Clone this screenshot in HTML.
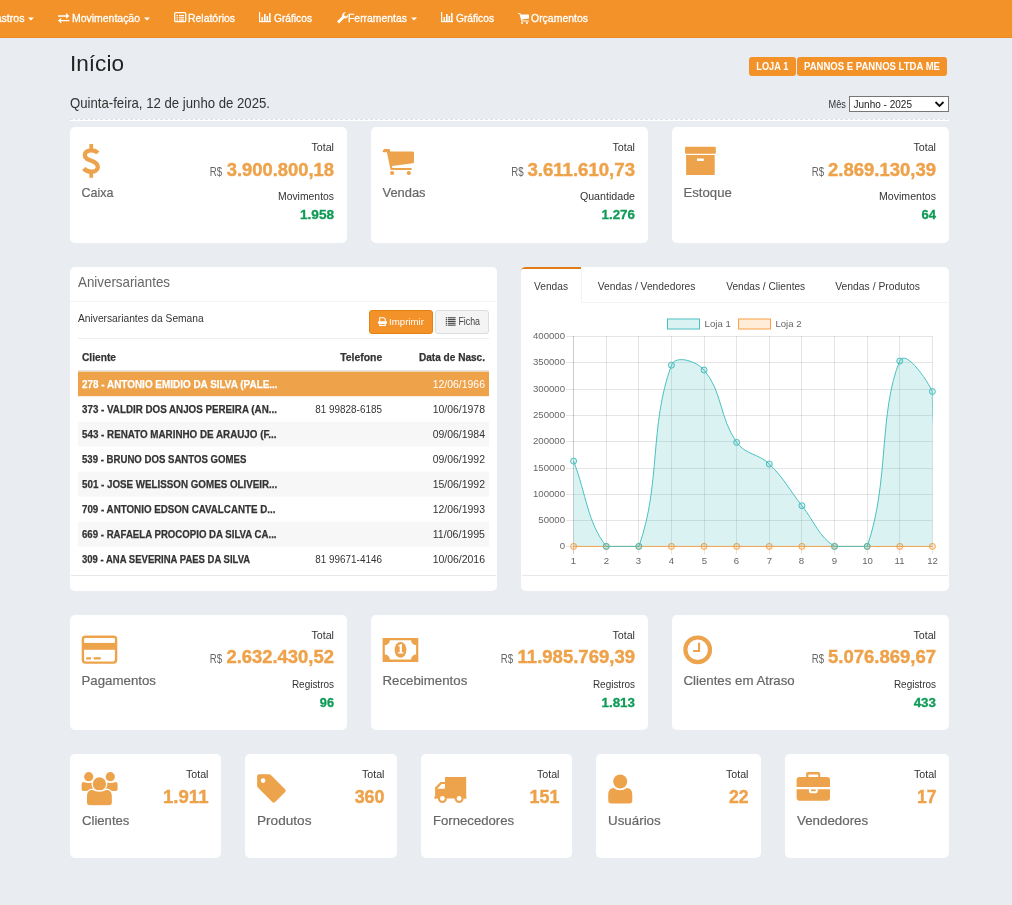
<!DOCTYPE html>
<html><head><meta charset="utf-8"><title>Início</title>
<style>html,body{margin:0;padding:0;background:#e9edf1;overflow:hidden} svg{display:block;will-change:transform;font-family:"Liberation Sans",sans-serif}</style>
</head><body><svg width="1012" height="905" viewBox="0 0 1012 905" font-family="Liberation Sans"><rect x="0" y="0" width="1012" height="905" fill="#e9edf1"/>
<rect x="0" y="0" width="1012" height="37" fill="#f29229"/>
<rect x="0" y="37" width="1012" height="1" fill="#ec8a22"/>
<rect x="0" y="38" width="1012" height="1" fill="#e3edf7"/>
<text x="24.5" y="21.6" font-size="10.6" fill="#fff" text-anchor="end" stroke="#fff" stroke-width="0.3">Cadastros</text>
<text x="72" y="21.6" font-size="10.6" fill="#fff" textLength="68" lengthAdjust="spacingAndGlyphs" stroke="#fff" stroke-width="0.3">Movimentação</text>
<text x="188" y="21.6" font-size="10.6" fill="#fff" textLength="47" lengthAdjust="spacingAndGlyphs" stroke="#fff" stroke-width="0.3">Relatórios</text>
<text x="274" y="21.6" font-size="10.6" fill="#fff" textLength="38" lengthAdjust="spacingAndGlyphs" stroke="#fff" stroke-width="0.3">Gráficos</text>
<text x="348" y="21.6" font-size="10.6" fill="#fff" textLength="59" lengthAdjust="spacingAndGlyphs" stroke="#fff" stroke-width="0.3">Ferramentas</text>
<text x="456" y="21.6" font-size="10.6" fill="#fff" textLength="38" lengthAdjust="spacingAndGlyphs" stroke="#fff" stroke-width="0.3">Gráficos</text>
<text x="531" y="21.6" font-size="10.6" fill="#fff" textLength="57" lengthAdjust="spacingAndGlyphs" stroke="#fff" stroke-width="0.3">Orçamentos</text>
<path d="M28 17.5 h6 l-3 3 z" fill="#fff"/>
<path d="M144 17.5 h6 l-3 3 z" fill="#fff"/>
<path d="M411 17.5 h6 l-3 3 z" fill="#fff"/>
<g fill="#fff"><path d="M58 15.3 h8.2 v-2.2 l3.2 2.9 l-3.2 2.9 v-2.2 h-8.2z"/><path d="M69.4 19.9 h-8.2 v-2.2 l-3.2 2.9 l3.2 2.9 v-2.2 h8.2z"/></g>
<g fill="none" stroke="#fff" stroke-width="1.3"><rect x="174.7" y="12.7" width="11" height="9" rx="1"/></g><g fill="#fff"><rect x="176.5" y="15" width="1.5" height="1.2"/><rect x="179" y="15" width="5" height="1.2"/><rect x="176.5" y="17.2" width="1.5" height="1.2"/><rect x="179" y="17.2" width="5" height="1.2"/><rect x="176.5" y="19.4" width="1.5" height="1.2"/><rect x="179" y="19.4" width="5" height="1.2"/></g>
<g fill="#fff"><rect x="259" y="12" width="1.2" height="10"/><rect x="259" y="21" width="12" height="1.2"/><rect x="261.5" y="17" width="1.6" height="4"/><rect x="264" y="14" width="1.6" height="7"/><rect x="266.5" y="16" width="1.6" height="5"/><rect x="269" y="13" width="1.6" height="8"/></g>
<g fill="#fff"><rect x="441" y="12" width="1.2" height="10"/><rect x="441" y="21" width="12" height="1.2"/><rect x="443.5" y="17" width="1.6" height="4"/><rect x="446" y="14" width="1.6" height="7"/><rect x="448.5" y="16" width="1.6" height="5"/><rect x="451" y="13" width="1.6" height="8"/></g>
<path d="M337 21.5 l5.2-5.2 a3.2 3.2 0 0 1 3.8-4 l-2 2 l0.6 1.6 l1.6 0.6 l2-2 a3.2 3.2 0 0 1 -4 3.8 l-5.2 5.2 z" fill="#fff"/>
<g fill="#fff"><path d="M518 13 h2.2 l0.6 1.6 h8.2 v4 l-7 1 l0.3 1 h6.5 v1 h-7.3 l-2-7.6 h-1.5z"/><circle cx="522" cy="23" r="1"/><circle cx="527" cy="23" r="1"/></g>
<text x="70" y="70.7" font-size="22.4" fill="#222" textLength="54" lengthAdjust="spacingAndGlyphs">Início</text>
<text x="70" y="108.2" font-size="14.2" fill="#333" textLength="200" lengthAdjust="spacingAndGlyphs">Quinta-feira, 12 de junho de 2025.</text>
<rect x="749" y="57" width="47" height="19" fill="#f29229" rx="3"/>
<rect x="797" y="57" width="150" height="19" fill="#f29229" rx="3"/>
<text x="756.3" y="70.3" font-size="10.2" fill="#fff" font-weight="bold" text-anchor=" stroke="#fff" stroke-width="0.4"" textLength="32" lengthAdjust="spacingAndGlyphs">LOJA 1</text>
<text x="804" y="70.3" font-size="10.2" fill="#fff" font-weight="bold" text-anchor=" stroke="#fff" stroke-width="0.4"" textLength="136" lengthAdjust="spacingAndGlyphs">PANNOS E PANNOS LTDA ME</text>
<text x="828.5" y="108.3" font-size="10.4" fill="#333" textLength="17.4" lengthAdjust="spacingAndGlyphs">Mês</text>
<rect x="849.5" y="96.5" width="99" height="15" fill="#fff" stroke="#767676" stroke-width="1"/>
<text x="853.5" y="108.3" font-size="10.8" fill="#222" textLength="58.5" lengthAdjust="spacingAndGlyphs">Junho - 2025</text>
<path d="M935.5 102 l4 4 l4 -4" fill="none" stroke="#111" stroke-width="1.8"/>
<rect x="70" y="119" width="879" height="2" fill="#fff"/>
<line x1="70" y1="119.5" x2="949" y2="119.5" stroke="#dfe2e6" stroke-width="1" stroke-dasharray="3 2"/>
<rect x="70" y="127" width="277" height="116" fill="#fff" rx="5"/>
<text x="334" y="150.7" font-size="10.7" fill="#333333" text-anchor="end" textLength="22.6" lengthAdjust="spacingAndGlyphs">Total</text>
<text x="209.8" y="175.9" font-size="12.2" fill="#666" textLength="12.4" lengthAdjust="spacingAndGlyphs">R$</text>
<text x="334" y="175.9" font-size="18.4" fill="#eea24a" font-weight="bold" text-anchor="end" textLength="107.3" lengthAdjust="spacingAndGlyphs" stroke="#eea24a" stroke-width="0.4">3.900.800,18</text>
<text x="334" y="199.8" font-size="10.2" fill="#333333" text-anchor="end" textLength="56" lengthAdjust="spacingAndGlyphs">Movimentos</text>
<text x="334" y="218.6" font-size="13" fill="#0f9b56" font-weight="bold" text-anchor="end" textLength="34" lengthAdjust="spacingAndGlyphs" stroke="#0f9b56" stroke-width="0.3">1.958</text>
<text x="81.5" y="197" font-size="13.6" fill="#666666" textLength="32" lengthAdjust="spacingAndGlyphs" stroke="#666666" stroke-width="0.2">Caixa</text>
<g><path d="M97.8 153 C96 150.8 93.8 150.3 91.3 150.3 C87.5 150.3 84.8 152 84.8 155 C84.8 158.5 87.8 159.5 91.5 160.8 C95.5 162.2 97.8 163.8 97.8 167 C97.8 170 95 171.7 91.3 171.7 C88 171.7 85.5 170.5 83.7 168.5" fill="none" stroke="#eda34b" stroke-width="4.3"/><rect x="89.4" y="144" width="3.7" height="5" fill="#eda34b"/><rect x="89.4" y="172" width="3.7" height="5.8" fill="#eda34b"/></g>
<rect x="371" y="127" width="277" height="116" fill="#fff" rx="5"/>
<text x="635" y="150.7" font-size="10.7" fill="#333333" text-anchor="end" textLength="22.6" lengthAdjust="spacingAndGlyphs">Total</text>
<text x="511.2" y="175.9" font-size="12.2" fill="#666" textLength="12.4" lengthAdjust="spacingAndGlyphs">R$</text>
<text x="635" y="175.9" font-size="18.4" fill="#eea24a" font-weight="bold" text-anchor="end" textLength="107.6" lengthAdjust="spacingAndGlyphs" stroke="#eea24a" stroke-width="0.4">3.611.610,73</text>
<text x="635" y="199.8" font-size="10.2" fill="#333333" text-anchor="end" textLength="55.1" lengthAdjust="spacingAndGlyphs">Quantidade</text>
<text x="635" y="218.6" font-size="13" fill="#0f9b56" font-weight="bold" text-anchor="end" textLength="33.5" lengthAdjust="spacingAndGlyphs" stroke="#0f9b56" stroke-width="0.3">1.276</text>
<text x="382.5" y="197" font-size="13.6" fill="#666666" textLength="43" lengthAdjust="spacingAndGlyphs" stroke="#666666" stroke-width="0.2">Vendas</text>
<g fill="#eda34b"><path d="M383.8 149 h5 a1.2 1.2 0 0 1 1.2 1 l0.2 1.4 h22.6 a1.2 1.2 0 0 1 1.2 1.2 v9.4 a1.2 1.2 0 0 1 -1 1.2 l-21 2.8 l0.4 1.9 h18.4 a1.1 1.1 0 0 1 0 2.2 h-20.2 l-3.7 -17.8 h-3.1 a1.2 1.2 0 0 1 0 -2.4z"/><circle cx="392.1" cy="173" r="2.1"/><circle cx="408.8" cy="173" r="2.1"/></g>
<rect x="672" y="127" width="277" height="116" fill="#fff" rx="5"/>
<text x="936" y="150.7" font-size="10.7" fill="#333333" text-anchor="end" textLength="22.6" lengthAdjust="spacingAndGlyphs">Total</text>
<text x="811.8" y="175.9" font-size="12.2" fill="#666" textLength="12.4" lengthAdjust="spacingAndGlyphs">R$</text>
<text x="936" y="175.9" font-size="18.4" fill="#eea24a" font-weight="bold" text-anchor="end" textLength="107.9" lengthAdjust="spacingAndGlyphs" stroke="#eea24a" stroke-width="0.4">2.869.130,39</text>
<text x="936" y="199.8" font-size="10.2" fill="#333333" text-anchor="end" textLength="57" lengthAdjust="spacingAndGlyphs">Movimentos</text>
<text x="936" y="218.6" font-size="13" fill="#0f9b56" font-weight="bold" text-anchor="end" textLength="14.5" lengthAdjust="spacingAndGlyphs" stroke="#0f9b56" stroke-width="0.3">64</text>
<text x="683.5" y="197" font-size="13.6" fill="#666666" textLength="48.3" lengthAdjust="spacingAndGlyphs" stroke="#666666" stroke-width="0.2">Estoque</text>
<g fill="#eda34b"><rect x="685" y="146.7" width="30.8" height="7" rx="1"/><path d="M686.1 155.1 h28.6 v19.9 h-28.6z M697 158.6 v2.3 h6.8 v-2.3z" fill-rule="evenodd"/></g>
<rect x="70" y="615" width="277" height="115" fill="#fff" rx="5"/>
<text x="334" y="638.7" font-size="10.7" fill="#333333" text-anchor="end" textLength="22.6" lengthAdjust="spacingAndGlyphs">Total</text>
<text x="209.7" y="662.9" font-size="12.2" fill="#666" textLength="12.4" lengthAdjust="spacingAndGlyphs">R$</text>
<text x="334" y="662.9" font-size="18.4" fill="#eea24a" font-weight="bold" text-anchor="end" textLength="107.6" lengthAdjust="spacingAndGlyphs" stroke="#eea24a" stroke-width="0.4">2.632.430,52</text>
<text x="334" y="687.8" font-size="10.2" fill="#333333" text-anchor="end" textLength="42.1" lengthAdjust="spacingAndGlyphs">Registros</text>
<text x="334" y="706.6" font-size="13" fill="#0f9b56" font-weight="bold" text-anchor="end" textLength="14.2" lengthAdjust="spacingAndGlyphs" stroke="#0f9b56" stroke-width="0.3">96</text>
<text x="81.5" y="685" font-size="13.6" fill="#666666" textLength="74.5" lengthAdjust="spacingAndGlyphs" stroke="#666666" stroke-width="0.2">Pagamentos</text>
<g><rect x="82.9" y="636.8" width="33.2" height="25.8" rx="2.5" fill="none" stroke="#eda34b" stroke-width="2.4"/><rect x="82" y="642.9" width="35" height="6.9" fill="#eda34b"/><rect x="86.2" y="657.2" width="4.8" height="2.3" fill="#eda34b"/><rect x="93.6" y="657.2" width="7.1" height="2.3" fill="#eda34b"/></g>
<rect x="371" y="615" width="277" height="115" fill="#fff" rx="5"/>
<text x="635" y="638.7" font-size="10.7" fill="#333333" text-anchor="end" textLength="22.6" lengthAdjust="spacingAndGlyphs">Total</text>
<text x="500.8" y="662.9" font-size="12.2" fill="#666" textLength="12.4" lengthAdjust="spacingAndGlyphs">R$</text>
<text x="635" y="662.9" font-size="18.4" fill="#eea24a" font-weight="bold" text-anchor="end" textLength="117.4" lengthAdjust="spacingAndGlyphs" stroke="#eea24a" stroke-width="0.4">11.985.769,39</text>
<text x="635" y="687.8" font-size="10.2" fill="#333333" text-anchor="end" textLength="42.1" lengthAdjust="spacingAndGlyphs">Registros</text>
<text x="635" y="706.6" font-size="13" fill="#0f9b56" font-weight="bold" text-anchor="end" textLength="33.5" lengthAdjust="spacingAndGlyphs" stroke="#0f9b56" stroke-width="0.3">1.813</text>
<text x="382.5" y="685" font-size="13.6" fill="#666666" textLength="84.8" lengthAdjust="spacingAndGlyphs" stroke="#666666" stroke-width="0.2">Recebimentos</text>
<g><path fill-rule="evenodd" fill="#eda34b" d="M382.6 638 h35.7 v23.9 h-35.7z M384.8 645.3 a5 5 0 0 0 5 -5 h21.3 a5 5 0 0 0 5 5 v9.2 a5 5 0 0 0 -5 5 h-21.3 a5 5 0 0 0 -5 -5z"/><ellipse cx="400.5" cy="649.8" rx="5.9" ry="7.9" fill="#eda34b"/><path d="M398.3 645.5 l2.6 -1.6 h1 v8.4 h1.6 v1.3 h-5.6 v-1.3 h1.8 v-6.3 l-1.4 0.7z" fill="#fff"/></g>
<rect x="672" y="615" width="277" height="115" fill="#fff" rx="5"/>
<text x="936" y="638.7" font-size="10.7" fill="#333333" text-anchor="end" textLength="22.6" lengthAdjust="spacingAndGlyphs">Total</text>
<text x="811.8" y="662.9" font-size="12.2" fill="#666" textLength="12.4" lengthAdjust="spacingAndGlyphs">R$</text>
<text x="936" y="662.9" font-size="18.4" fill="#eea24a" font-weight="bold" text-anchor="end" textLength="107.9" lengthAdjust="spacingAndGlyphs" stroke="#eea24a" stroke-width="0.4">5.076.869,67</text>
<text x="936" y="687.8" font-size="10.2" fill="#333333" text-anchor="end" textLength="42.1" lengthAdjust="spacingAndGlyphs">Registros</text>
<text x="936" y="706.6" font-size="13" fill="#0f9b56" font-weight="bold" text-anchor="end" textLength="22.3" lengthAdjust="spacingAndGlyphs" stroke="#0f9b56" stroke-width="0.3">433</text>
<text x="683.5" y="685" font-size="13.6" fill="#666666" textLength="111.2" lengthAdjust="spacingAndGlyphs" stroke="#666666" stroke-width="0.2">Clientes em Atraso</text>
<g><circle cx="697.7" cy="649.8" r="12.3" fill="none" stroke="#eda34b" stroke-width="4.2"/><path d="M698 642.8 h2.1 v9.3 h-7 v-2.1 h4.9z" fill="#eda34b"/></g>
<rect x="70" y="754" width="151" height="104" fill="#fff" rx="5"/>
<text x="208.5" y="778.4" font-size="10.7" fill="#333333" text-anchor="end" textLength="22.6" lengthAdjust="spacingAndGlyphs">Total</text>
<text x="208.5" y="802.8" font-size="18" fill="#eea24a" font-weight="bold" text-anchor="end" textLength="45.5" lengthAdjust="spacingAndGlyphs" stroke="#eea24a" stroke-width="0.4">1.911</text>
<text x="82" y="825" font-size="13.6" fill="#666666" textLength="47.4" lengthAdjust="spacingAndGlyphs" stroke="#666666" stroke-width="0.2">Clientes</text>
<g fill="#eda34b"><circle cx="88.7" cy="776.7" r="4.6"/><circle cx="110.3" cy="776.7" r="4.6"/><path d="M81.6 784 q0-2 2-2 q2.3 1.1 5.1 1.1 q2.8 0 5.1 -1.1 q2 0 2 2 v5 q0 2 -2 2 h-10.2 q-2 0 -2 -2z"/><path d="M103.4 784 q0-2 2-2 q2.3 1.1 5.1 1.1 q2.8 0 5.1 -1.1 q2 0 2 2 v5 q0 2 -2 2 h-10.2 q-2 0 -2 -2z"/><g fill="#eda34b" stroke="#fff" stroke-width="1.3"><circle cx="99.4" cy="784" r="7.3"/><path d="M86.3 796 q0-6.2 6.2-6.8 q3 1.8 6.9 1.8 q3.9 0 6.9 -1.8 q6.2 0.6 6.2 6.8 v6.8 q0 3 -3 3 h-20.2 q-3 0 -3 -3z"/></g></g>
<rect x="245" y="754" width="152" height="104" fill="#fff" rx="5"/>
<text x="384.5" y="778.4" font-size="10.7" fill="#333333" text-anchor="end" textLength="22.6" lengthAdjust="spacingAndGlyphs">Total</text>
<text x="384.5" y="802.8" font-size="18" fill="#eea24a" font-weight="bold" text-anchor="end" textLength="29.8" lengthAdjust="spacingAndGlyphs" stroke="#eea24a" stroke-width="0.4">360</text>
<text x="257" y="825" font-size="13.6" fill="#666666" textLength="54.5" lengthAdjust="spacingAndGlyphs" stroke="#666666" stroke-width="0.2">Produtos</text>
<g><path fill="#eda34b" d="M257.1 776.2 q0-2 2-2 h9.8 q1.2 0 2 0.8 l14.2 14.2 q1.4 1.4 0 2.8 l-10 10 q-1.4 1.4 -2.8 0 l-14.2 -14.2 q-1 -1 -1 -2.2z"/><circle cx="263.1" cy="780.6" r="2.3" fill="#fff"/></g>
<rect x="421" y="754" width="151" height="104" fill="#fff" rx="5"/>
<text x="559.5" y="778.4" font-size="10.7" fill="#333333" text-anchor="end" textLength="22.6" lengthAdjust="spacingAndGlyphs">Total</text>
<text x="559.5" y="802.8" font-size="18" fill="#eea24a" font-weight="bold" text-anchor="end" textLength="29.9" lengthAdjust="spacingAndGlyphs" stroke="#eea24a" stroke-width="0.4">151</text>
<text x="433" y="825" font-size="13.6" fill="#666666" textLength="81.1" lengthAdjust="spacingAndGlyphs" stroke="#666666" stroke-width="0.2">Fornecedores</text>
<g fill="#eda34b"><path fill-rule="evenodd" d="M445 777 h21.2 v21.5 h-21.2z M435.1 787.4 l5.4 -5.3 h4.5 v16.4 h-9.9z M437.3 788.8 h7.6 v-4.9 h-3.4z"/><rect x="434.2" y="796.7" width="2" height="1.8"/><rect x="464.5" y="796.7" width="1.9" height="1.8"/><circle cx="442.4" cy="798.5" r="4.5"/><circle cx="459.1" cy="798.5" r="4.5"/><circle cx="442.4" cy="798.5" r="2.4" fill="#fff"/><circle cx="459.1" cy="798.5" r="2.4" fill="#fff"/></g>
<rect x="596" y="754" width="165" height="104" fill="#fff" rx="5"/>
<text x="748.5" y="778.4" font-size="10.7" fill="#333333" text-anchor="end" textLength="22.6" lengthAdjust="spacingAndGlyphs">Total</text>
<text x="748.5" y="802.8" font-size="18" fill="#eea24a" font-weight="bold" text-anchor="end" textLength="19.6" lengthAdjust="spacingAndGlyphs" stroke="#eea24a" stroke-width="0.4">22</text>
<text x="608" y="825" font-size="13.6" fill="#666666" textLength="52.7" lengthAdjust="spacingAndGlyphs" stroke="#666666" stroke-width="0.2">Usuários</text>
<g fill="#eda34b"><path d="M608.2 795 q0-6.9 5.5-6.9 q2.6 2.2 6.5 2.2 q3.9 0 6.5 -2.2 q5.6 0 5.6 6.9 v5.4 q0 3 -3 3 h-18.1 q-3 0 -3 -3z"/><circle cx="620.2" cy="781.5" r="7.6" fill="#fff"/><circle cx="620.2" cy="781.5" r="7"/></g>
<rect x="785" y="754" width="164" height="104" fill="#fff" rx="5"/>
<text x="936.5" y="778.4" font-size="10.7" fill="#333333" text-anchor="end" textLength="22.6" lengthAdjust="spacingAndGlyphs">Total</text>
<text x="936.5" y="802.8" font-size="18" fill="#eea24a" font-weight="bold" text-anchor="end" textLength="19.4" lengthAdjust="spacingAndGlyphs" stroke="#eea24a" stroke-width="0.4">17</text>
<text x="797" y="825" font-size="13.6" fill="#666666" textLength="71.2" lengthAdjust="spacingAndGlyphs" stroke="#666666" stroke-width="0.2">Vendedores</text>
<g fill="#eda34b"><path fill-rule="evenodd" d="M806.1 777.1 v-3 q0-2 2-2 h10.1 q2 0 2 2 v3z M808.4 777.1 v-2.5 h9.8 v2.5z"/><path d="M796.6 780.1 q0-3 3-3 h27.4 q3 0 3 3 v6.8 h-33.4z"/><path d="M796.6 789.2 h12.3 v2.1 q0 2 2 2 h4.8 q2 0 2 -2 v-2.1 h12.3 v8.6 q0 3 -3 3 h-27.4 q-3 0 -3 -3z"/><rect x="811.1" y="789.4" width="4.6" height="1.8"/></g>
<rect x="70" y="267" width="427" height="324" fill="#fff" rx="5"/>
<text x="78" y="287.2" font-size="14.3" fill="#666" textLength="92" lengthAdjust="spacingAndGlyphs">Aniversariantes</text>
<rect x="70" y="301" width="427" height="1" fill="#f4f4f4"/>
<text x="78" y="322" font-size="11.4" fill="#333" textLength="125.7" lengthAdjust="spacingAndGlyphs">Aniversariantes da Semana</text>
<rect x="78" y="338" width="411" height="1" fill="#eeeeee"/>
<rect x="369.5" y="310.5" width="63" height="23" rx="2.5" fill="#f29229" stroke="#e3820f"/>
<text x="389" y="325.2" font-size="9.9" fill="#fff" textLength="35" lengthAdjust="spacingAndGlyphs">Imprimir</text>
<g fill="none" stroke="#fff" stroke-width="1.1"><path d="M379.7 321.4 v-3.6 h4.2 l1.4 1.4 v2.2"/><rect x="379.7" y="323.6" width="5.6" height="1.9"/></g><rect x="378" y="321.2" width="9" height="2.6" rx="0.6" fill="#fff"/>
<rect x="435.5" y="310.5" width="53" height="23" rx="2.5" fill="#f4f4f4" stroke="#dddddd"/>
<text x="458.4" y="325" font-size="10.2" fill="#444" textLength="21.6" lengthAdjust="spacingAndGlyphs">Ficha</text>
<g fill="#444"><rect x="445.8" y="317.20" width="1.2" height="1.1"/><rect x="447.8" y="317.20" width="7.8" height="1.1"/><rect x="445.8" y="319.05" width="1.2" height="1.1"/><rect x="447.8" y="319.05" width="7.8" height="1.1"/><rect x="445.8" y="320.90" width="1.2" height="1.1"/><rect x="447.8" y="320.90" width="7.8" height="1.1"/><rect x="445.8" y="322.75" width="1.2" height="1.1"/><rect x="447.8" y="322.75" width="7.8" height="1.1"/><rect x="445.8" y="324.60" width="1.2" height="1.1"/><rect x="447.8" y="324.60" width="7.8" height="1.1"/></g>
<text x="82" y="361" font-size="11" fill="#333" font-weight="bold" textLength="34" lengthAdjust="spacingAndGlyphs" stroke="#333" stroke-width="0.25">Cliente</text>
<text x="340.2" y="361" font-size="11" fill="#333" font-weight="bold" textLength="42" lengthAdjust="spacingAndGlyphs" stroke="#333" stroke-width="0.25">Telefone</text>
<text x="419" y="361" font-size="11" fill="#333" font-weight="bold" textLength="66" lengthAdjust="spacingAndGlyphs" stroke="#333" stroke-width="0.25">Data de Nasc.</text>
<rect x="78" y="370" width="411" height="1" fill="#e4e4e4"/>
<rect x="78" y="371" width="411" height="1" fill="#f6f6f6"/>
<rect x="78" y="371.6" width="411" height="24.6" fill="#eea24a"/>
<text x="82" y="388.3" font-size="11" fill="#fff" font-weight="bold" textLength="195.6" lengthAdjust="spacingAndGlyphs" stroke="#fff" stroke-width="0.25">278 - ANTONIO EMIDIO DA SILVA (PALE...</text>
<text x="432.7" y="388.3" font-size="11" fill="#fff" textLength="52.3" lengthAdjust="spacingAndGlyphs">12/06/1966</text>
<text x="82" y="413.3" font-size="11" fill="#333" font-weight="bold" textLength="194.9" lengthAdjust="spacingAndGlyphs" stroke="#333" stroke-width="0.25">373 - VALDIR DOS ANJOS PEREIRA (AN...</text>
<text x="315.3" y="413.3" font-size="11" fill="#333" textLength="66.6" lengthAdjust="spacingAndGlyphs">81 99828-6185</text>
<text x="432.7" y="413.3" font-size="11" fill="#333" textLength="52.3" lengthAdjust="spacingAndGlyphs">10/06/1978</text>
<rect x="78" y="421.6" width="411" height="25" fill="#f7f7f7"/>
<text x="82" y="438.3" font-size="11" fill="#333" font-weight="bold" textLength="194.5" lengthAdjust="spacingAndGlyphs" stroke="#333" stroke-width="0.25">543 - RENATO MARINHO DE ARAUJO (F...</text>
<text x="432.7" y="438.3" font-size="11" fill="#333" textLength="52.3" lengthAdjust="spacingAndGlyphs">09/06/1984</text>
<text x="82" y="463.3" font-size="11" fill="#333" font-weight="bold" textLength="164.3" lengthAdjust="spacingAndGlyphs" stroke="#333" stroke-width="0.25">539 - BRUNO DOS SANTOS GOMES</text>
<text x="432.7" y="463.3" font-size="11" fill="#333" textLength="52.3" lengthAdjust="spacingAndGlyphs">09/06/1992</text>
<rect x="78" y="471.6" width="411" height="25" fill="#f7f7f7"/>
<text x="82" y="488.3" font-size="11" fill="#333" font-weight="bold" textLength="195.2" lengthAdjust="spacingAndGlyphs" stroke="#333" stroke-width="0.25">501 - JOSE WELISSON GOMES OLIVEIR...</text>
<text x="432.7" y="488.3" font-size="11" fill="#333" textLength="52.3" lengthAdjust="spacingAndGlyphs">15/06/1992</text>
<text x="82" y="513.3" font-size="11" fill="#333" font-weight="bold" textLength="193.4" lengthAdjust="spacingAndGlyphs" stroke="#333" stroke-width="0.25">709 - ANTONIO EDSON CAVALCANTE D...</text>
<text x="432.7" y="513.3" font-size="11" fill="#333" textLength="52.3" lengthAdjust="spacingAndGlyphs">12/06/1993</text>
<rect x="78" y="521.6" width="411" height="25" fill="#f7f7f7"/>
<text x="82" y="538.3" font-size="11" fill="#333" font-weight="bold" textLength="194.5" lengthAdjust="spacingAndGlyphs" stroke="#333" stroke-width="0.25">669 - RAFAELA PROCOPIO DA SILVA CA...</text>
<text x="432.7" y="538.3" font-size="11" fill="#333" textLength="52.3" lengthAdjust="spacingAndGlyphs">11/06/1995</text>
<text x="82" y="563.3" font-size="11" fill="#333" font-weight="bold" textLength="168.2" lengthAdjust="spacingAndGlyphs" stroke="#333" stroke-width="0.25">309 - ANA SEVERINA PAES DA SILVA</text>
<text x="315.3" y="563.3" font-size="11" fill="#333" textLength="66.6" lengthAdjust="spacingAndGlyphs">81 99671-4146</text>
<text x="432.7" y="563.3" font-size="11" fill="#333" textLength="52.3" lengthAdjust="spacingAndGlyphs">10/06/2016</text>
<rect x="71" y="575" width="425" height="1" fill="#e8e8e8"/>
<rect x="521" y="267" width="428" height="324" fill="#fff" rx="5"/>
<rect x="581" y="302" width="368" height="1" fill="#f4f4f4"/>
<rect x="581" y="269" width="1" height="34" fill="#f4f4f4"/>
<path d="M521 272 q0-5 5-5 h55 v2 h-60z" fill="#e27c1b"/>
<text x="534" y="290" font-size="11" fill="#3a3a3a" textLength="34" lengthAdjust="spacingAndGlyphs">Vendas</text>
<text x="597.8" y="290" font-size="11" fill="#3a3a3a" textLength="97.6" lengthAdjust="spacingAndGlyphs">Vendas / Vendedores</text>
<text x="726.2" y="290" font-size="11" fill="#3a3a3a" textLength="79" lengthAdjust="spacingAndGlyphs">Vendas / Clientes</text>
<text x="835.2" y="290" font-size="11" fill="#3a3a3a" textLength="84.8" lengthAdjust="spacingAndGlyphs">Vendas / Produtos</text>
<rect x="522" y="575" width="426" height="1" fill="#e8e8e8"/>
<g font-family="Liberation Sans" font-size="9.6" fill="#666">
<rect x="667.5" y="319" width="32" height="10" fill="rgba(75,192,192,0.2)" stroke="rgb(75,192,192)" stroke-width="1"/>
<text x="704.6" y="327.4">Loja 1</text>
<rect x="738.5" y="319" width="32" height="10" fill="rgba(255,159,64,0.2)" stroke="rgb(255,159,64)" stroke-width="1"/>
<text x="775.4" y="327.4">Loja 2</text>
<line x1="566" y1="336.5" x2="932.4" y2="336.5" stroke="rgba(0,0,0,0.1)"/>
<text x="565" y="339.0" text-anchor="end">400000</text>
<line x1="566" y1="362.5" x2="932.4" y2="362.5" stroke="rgba(0,0,0,0.1)"/>
<text x="565" y="365.0" text-anchor="end">350000</text>
<line x1="566" y1="389.5" x2="932.4" y2="389.5" stroke="rgba(0,0,0,0.1)"/>
<text x="565" y="392.0" text-anchor="end">300000</text>
<line x1="566" y1="415.5" x2="932.4" y2="415.5" stroke="rgba(0,0,0,0.1)"/>
<text x="565" y="418.0" text-anchor="end">250000</text>
<line x1="566" y1="441.5" x2="932.4" y2="441.5" stroke="rgba(0,0,0,0.1)"/>
<text x="565" y="444.0" text-anchor="end">200000</text>
<line x1="566" y1="468.5" x2="932.4" y2="468.5" stroke="rgba(0,0,0,0.1)"/>
<text x="565" y="471.0" text-anchor="end">150000</text>
<line x1="566" y1="494.5" x2="932.4" y2="494.5" stroke="rgba(0,0,0,0.1)"/>
<text x="565" y="497.0" text-anchor="end">100000</text>
<line x1="566" y1="520.5" x2="932.4" y2="520.5" stroke="rgba(0,0,0,0.1)"/>
<text x="565" y="523.0" text-anchor="end">50000</text>
<line x1="566" y1="546.5" x2="932.4" y2="546.5" stroke="rgba(0,0,0,0.1)"/>
<text x="565" y="549.0" text-anchor="end">0</text>
<line x1="573.5" y1="336" x2="573.5" y2="554" stroke="rgba(0,0,0,0.2)"/>
<text x="573.5" y="563.6" text-anchor="middle">1</text>
<line x1="606.5" y1="336" x2="606.5" y2="554" stroke="rgba(0,0,0,0.1)"/>
<text x="606.5" y="563.6" text-anchor="middle">2</text>
<line x1="638.5" y1="336" x2="638.5" y2="554" stroke="rgba(0,0,0,0.1)"/>
<text x="638.5" y="563.6" text-anchor="middle">3</text>
<line x1="671.5" y1="336" x2="671.5" y2="554" stroke="rgba(0,0,0,0.1)"/>
<text x="671.5" y="563.6" text-anchor="middle">4</text>
<line x1="704.5" y1="336" x2="704.5" y2="554" stroke="rgba(0,0,0,0.1)"/>
<text x="704.5" y="563.6" text-anchor="middle">5</text>
<line x1="736.5" y1="336" x2="736.5" y2="554" stroke="rgba(0,0,0,0.1)"/>
<text x="736.5" y="563.6" text-anchor="middle">6</text>
<line x1="769.5" y1="336" x2="769.5" y2="554" stroke="rgba(0,0,0,0.1)"/>
<text x="769.5" y="563.6" text-anchor="middle">7</text>
<line x1="801.5" y1="336" x2="801.5" y2="554" stroke="rgba(0,0,0,0.1)"/>
<text x="801.5" y="563.6" text-anchor="middle">8</text>
<line x1="834.5" y1="336" x2="834.5" y2="554" stroke="rgba(0,0,0,0.1)"/>
<text x="834.5" y="563.6" text-anchor="middle">9</text>
<line x1="867.5" y1="336" x2="867.5" y2="554" stroke="rgba(0,0,0,0.1)"/>
<text x="867.5" y="563.6" text-anchor="middle">10</text>
<line x1="899.5" y1="336" x2="899.5" y2="554" stroke="rgba(0,0,0,0.1)"/>
<text x="899.5" y="563.6" text-anchor="middle">11</text>
<line x1="932.5" y1="336" x2="932.5" y2="554" stroke="rgba(0,0,0,0.1)"/>
<text x="932.5" y="563.6" text-anchor="middle">12</text>
</g>
<defs><clipPath id="ca"><rect x="572.6" y="331" width="359.99999999999994" height="216.39999999999998"/></clipPath></defs>
<line x1="573.6" y1="546.4" x2="932.4" y2="546.4" stroke="rgb(255,159,64)" stroke-width="1"/>
<circle cx="573.60" cy="546.4" r="3" fill="rgba(255,159,64,0.2)" stroke="rgb(255,159,64)" stroke-width="1"/>
<circle cx="606.22" cy="546.4" r="3" fill="rgba(255,159,64,0.2)" stroke="rgb(255,159,64)" stroke-width="1"/>
<circle cx="638.84" cy="546.4" r="3" fill="rgba(255,159,64,0.2)" stroke="rgb(255,159,64)" stroke-width="1"/>
<circle cx="671.45" cy="546.4" r="3" fill="rgba(255,159,64,0.2)" stroke="rgb(255,159,64)" stroke-width="1"/>
<circle cx="704.07" cy="546.4" r="3" fill="rgba(255,159,64,0.2)" stroke="rgb(255,159,64)" stroke-width="1"/>
<circle cx="736.69" cy="546.4" r="3" fill="rgba(255,159,64,0.2)" stroke="rgb(255,159,64)" stroke-width="1"/>
<circle cx="769.31" cy="546.4" r="3" fill="rgba(255,159,64,0.2)" stroke="rgb(255,159,64)" stroke-width="1"/>
<circle cx="801.93" cy="546.4" r="3" fill="rgba(255,159,64,0.2)" stroke="rgb(255,159,64)" stroke-width="1"/>
<circle cx="834.55" cy="546.4" r="3" fill="rgba(255,159,64,0.2)" stroke="rgb(255,159,64)" stroke-width="1"/>
<circle cx="867.16" cy="546.4" r="3" fill="rgba(255,159,64,0.2)" stroke="rgb(255,159,64)" stroke-width="1"/>
<circle cx="899.78" cy="546.4" r="3" fill="rgba(255,159,64,0.2)" stroke="rgb(255,159,64)" stroke-width="1"/>
<circle cx="932.40" cy="546.4" r="3" fill="rgba(255,159,64,0.2)" stroke="rgb(255,159,64)" stroke-width="1"/>
<g clip-path="url(#ca)"><path d="M573.60 461.10 C586.65 495.22 586.99 521.26 606.22 546.40 C613.09 546.40 634.91 546.40 638.84 546.40 C661.00 484.83 649.32 425.04 671.45 365.20 C675.42 354.48 696.42 360.94 704.07 370.00 C722.51 391.82 719.21 417.22 736.69 442.41 C745.30 454.82 758.22 453.24 769.31 464.00 C784.32 478.56 788.78 489.10 801.93 505.70 C814.88 522.06 818.49 536.38 834.55 546.40 C844.59 546.40 863.31 546.40 867.16 546.40 C889.40 483.19 878.69 411.08 899.78 361.00 C904.78 349.12 924.74 375.90 932.40 391.50 C932.40 429.02 932.40 452.88 965.02 493.80 L965.02 546.4 L573.6 546.4 Z" fill="rgba(75,192,192,0.2)"/>
<path d="M573.60 461.10 C586.65 495.22 586.99 521.26 606.22 546.40 C613.09 546.40 634.91 546.40 638.84 546.40 C661.00 484.83 649.32 425.04 671.45 365.20 C675.42 354.48 696.42 360.94 704.07 370.00 C722.51 391.82 719.21 417.22 736.69 442.41 C745.30 454.82 758.22 453.24 769.31 464.00 C784.32 478.56 788.78 489.10 801.93 505.70 C814.88 522.06 818.49 536.38 834.55 546.40 C844.59 546.40 863.31 546.40 867.16 546.40 C889.40 483.19 878.69 411.08 899.78 361.00 C904.78 349.12 924.74 375.90 932.40 391.50 C932.40 429.02 932.40 452.88 965.02 493.80" fill="none" stroke="rgb(75,192,192)" stroke-width="1"/></g>
<circle cx="573.60" cy="461.10" r="3" fill="rgba(75,192,192,0.2)" stroke="rgb(75,192,192)" stroke-width="1"/>
<circle cx="606.22" cy="546.40" r="3" fill="rgba(75,192,192,0.2)" stroke="rgb(75,192,192)" stroke-width="1"/>
<circle cx="638.84" cy="546.40" r="3" fill="rgba(75,192,192,0.2)" stroke="rgb(75,192,192)" stroke-width="1"/>
<circle cx="671.45" cy="365.20" r="3" fill="rgba(75,192,192,0.2)" stroke="rgb(75,192,192)" stroke-width="1"/>
<circle cx="704.07" cy="370.00" r="3" fill="rgba(75,192,192,0.2)" stroke="rgb(75,192,192)" stroke-width="1"/>
<circle cx="736.69" cy="442.41" r="3" fill="rgba(75,192,192,0.2)" stroke="rgb(75,192,192)" stroke-width="1"/>
<circle cx="769.31" cy="464.00" r="3" fill="rgba(75,192,192,0.2)" stroke="rgb(75,192,192)" stroke-width="1"/>
<circle cx="801.93" cy="505.70" r="3" fill="rgba(75,192,192,0.2)" stroke="rgb(75,192,192)" stroke-width="1"/>
<circle cx="834.55" cy="546.40" r="3" fill="rgba(75,192,192,0.2)" stroke="rgb(75,192,192)" stroke-width="1"/>
<circle cx="867.16" cy="546.40" r="3" fill="rgba(75,192,192,0.2)" stroke="rgb(75,192,192)" stroke-width="1"/>
<circle cx="899.78" cy="361.00" r="3" fill="rgba(75,192,192,0.2)" stroke="rgb(75,192,192)" stroke-width="1"/>
<circle cx="932.40" cy="391.50" r="3" fill="rgba(75,192,192,0.2)" stroke="rgb(75,192,192)" stroke-width="1"/></svg></body></html>
